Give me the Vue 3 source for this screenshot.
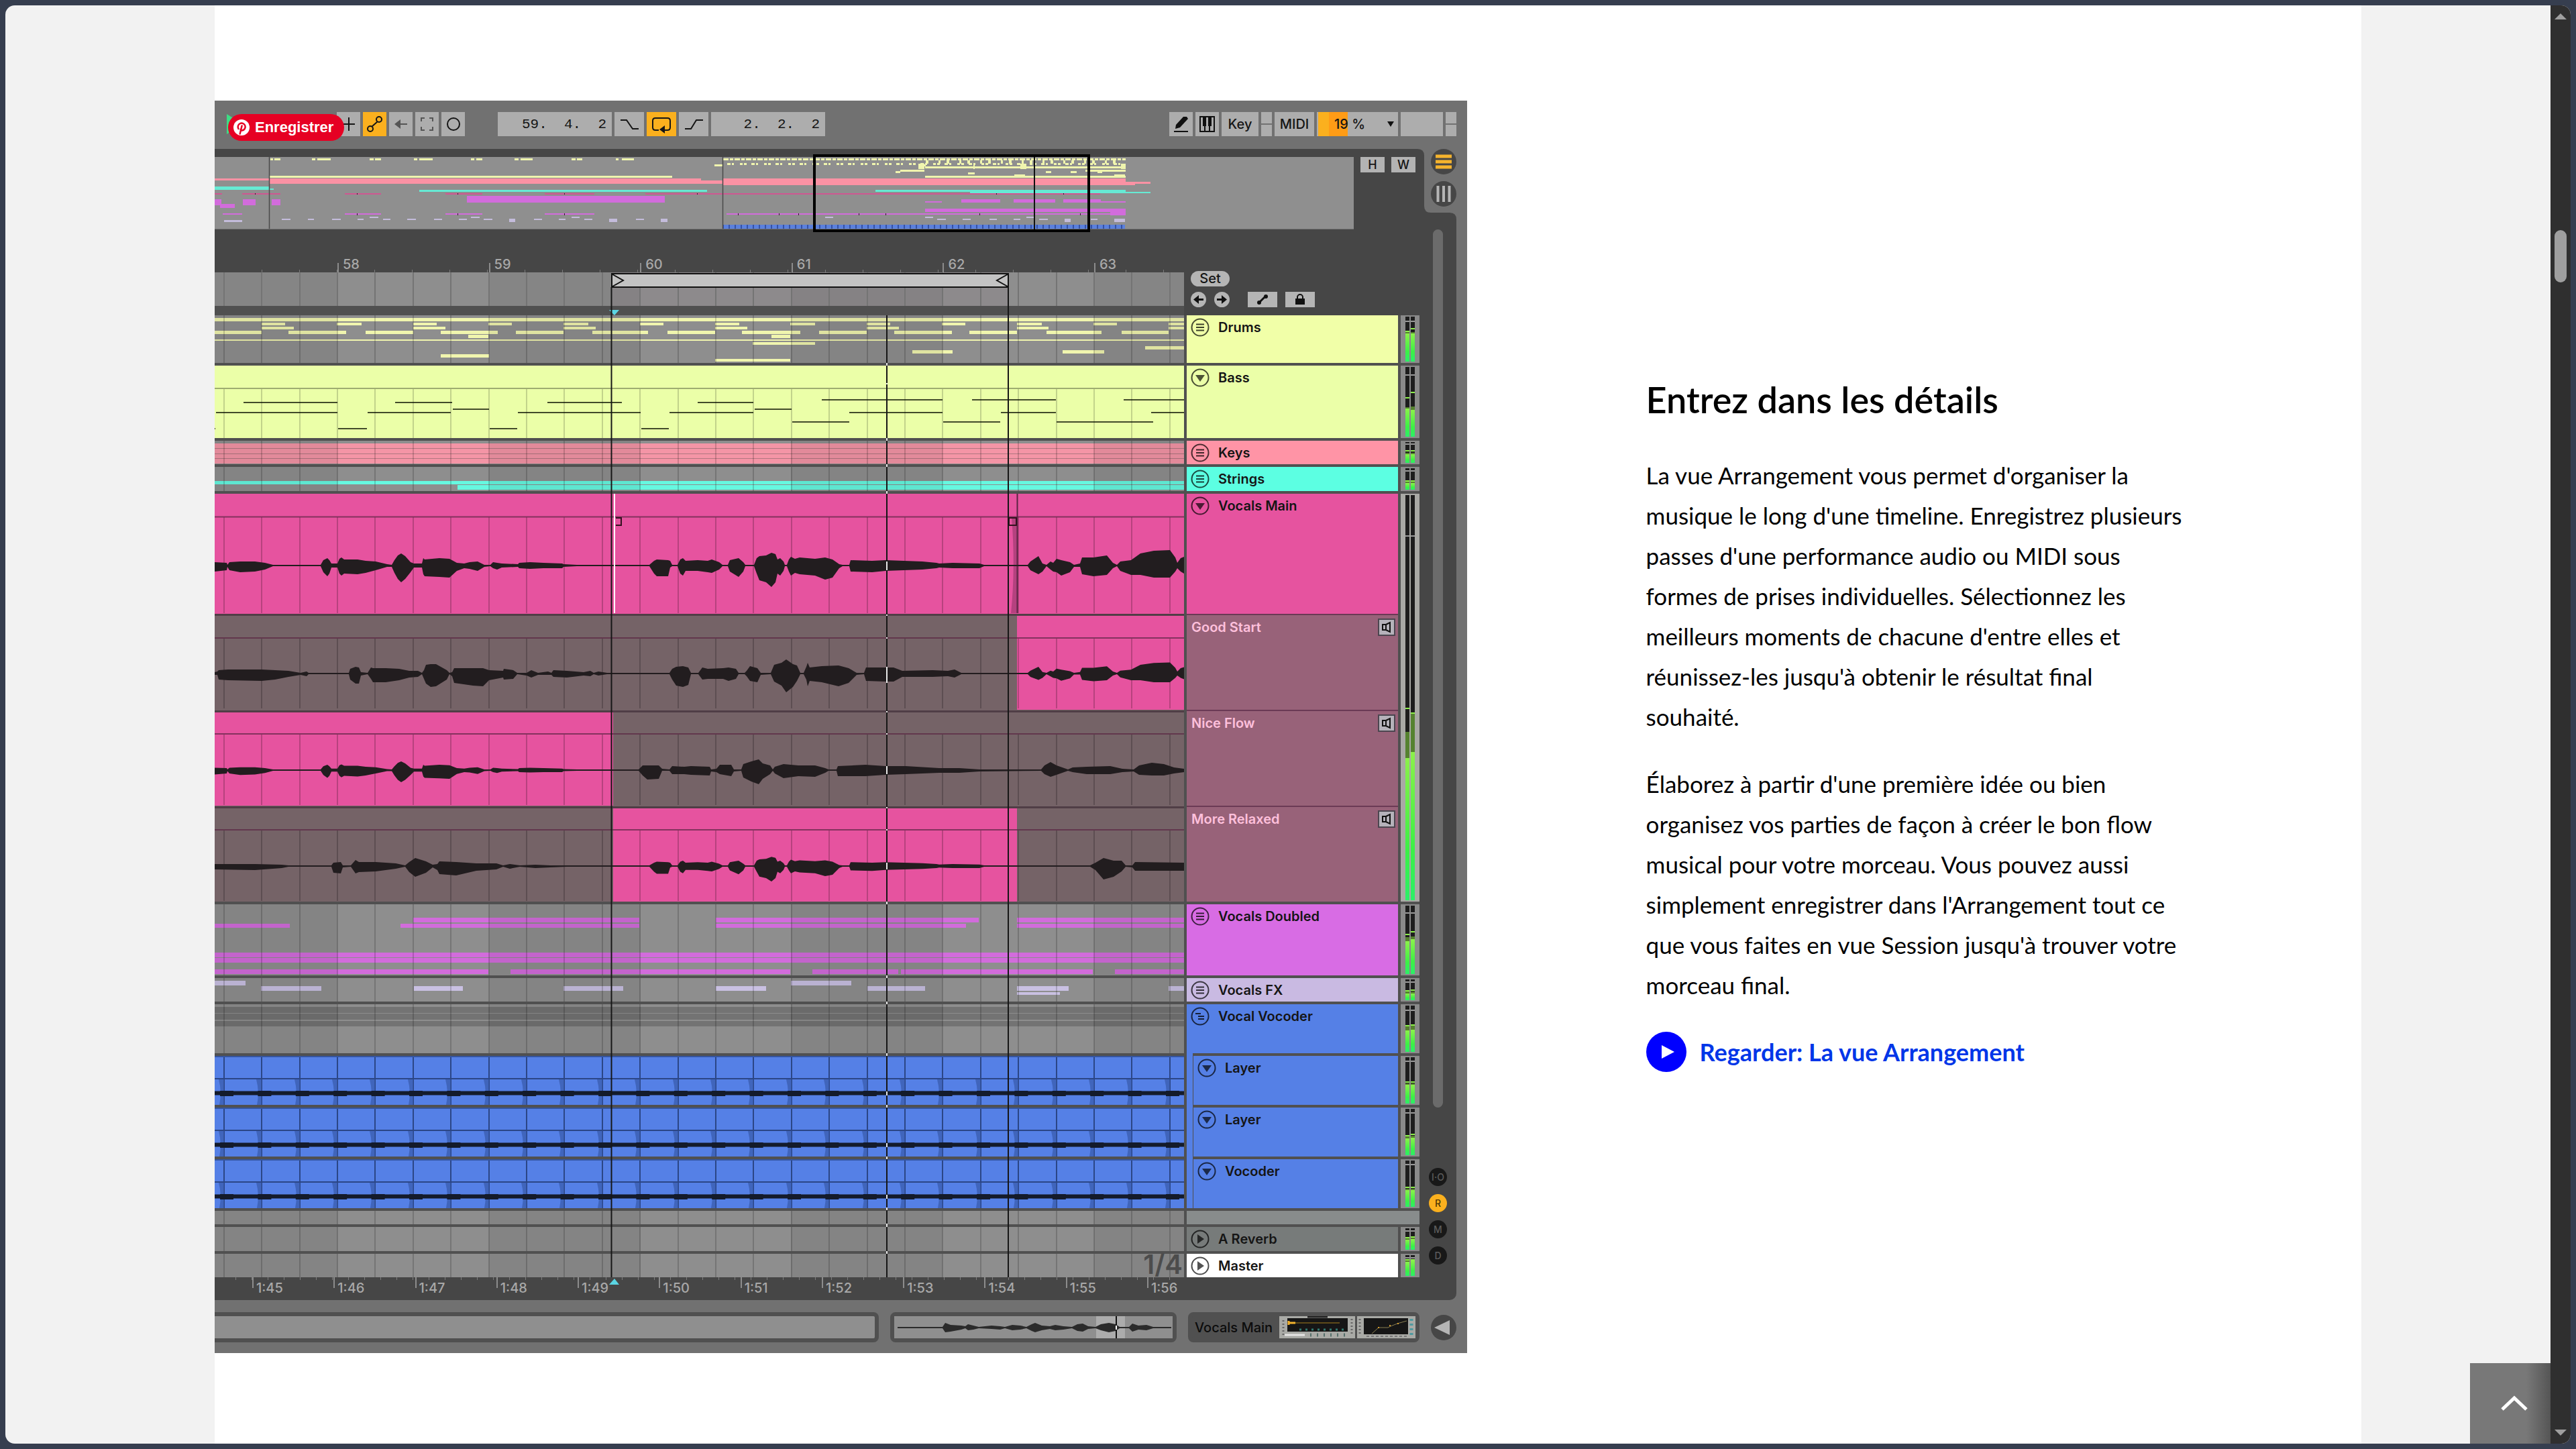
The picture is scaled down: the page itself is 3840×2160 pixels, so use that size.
<template>
   <div class="frame">
      <main class="page">
         <section class="feature">
            <div class="live">
               <button class="pin" type="button">
                  <svg width="24" height="24" viewBox="0 0 24 24">
                     <circle cx="12" cy="12" r="12" fill="#fff" />
                     <path
                        d="M7.500 14A5.500 5.500 0 1 1 13 16.500Q11.300 16.500 10.600 15M12.600 9.500 9.700 21.500"
                        fill="none"
                        stroke="#e60023"
                        stroke-width="2.500"
                        stroke-linecap="round"
                     />
                  </svg>
                  Enregistrer
               </button>

               <div class="toolbar">
                  <svg class="play-mark" width="24" height="36" viewBox="0 0 24 36">
                     <path d="M0 3 24 18 0 33Z" fill="#3ddc84" />
                  </svg>
                  <div class="tool-group">
                     <button
                        v-for="tool in tools"
                        :key="tool.name"
                        class="tool"
                        :class="{ active: tool.active }"
                        type="button"
                        :aria-label="tool.name"
                     >
                        <svg width="35" height="36" viewBox="0 0 35 36">
                           <path :d="tool.d" fill="none" :stroke="tool.stroke" stroke-width="2" />
                           <path v-if="tool.fill" :d="tool.fill" :fill="tool.stroke" />
                        </svg>
                     </button>
                  </div>
                  <div class="tool-group transport">
                     <span class="position">59.&nbsp;&nbsp;4.&nbsp;&nbsp;2</span>
                     <button
                        v-for="tool in loopTools"
                        :key="tool.name"
                        class="tool wide"
                        :class="{ active: tool.active }"
                        type="button"
                        :aria-label="tool.name"
                     >
                        <svg width="44" height="36" viewBox="0 0 44 36">
                           <path :d="tool.d" fill="none" stroke="#151515" stroke-width="2" />
                           <path v-if="tool.fill" :d="tool.fill" fill="#151515" />
                        </svg>
                     </button>
                     <span class="position">2.&nbsp;&nbsp;2.&nbsp;&nbsp;2</span>
                  </div>
                  <div class="tool-group right">
                     <button class="tool" type="button" aria-label="Draw">
                        <svg width="35" height="36" viewBox="0 0 35 36">
                           <path d="M10 19 21 7h5l2 3L16 23l-7 2Z" fill="#111" />
                           <path d="M7 29H28" stroke="#111" stroke-width="2" />
                        </svg>
                     </button>
                     <button class="tool" type="button" aria-label="Keyboard">
                        <svg width="35" height="36" viewBox="0 0 35 36">
                           <path d="M7 7H28V29H7ZM14 20V29M21 20V29" fill="none" stroke="#111" stroke-width="2" />
                           <path d="M11 7h5v14h-5ZM19 7h5v14h-5Z" fill="#111" />
                        </svg>
                     </button>
                     <button class="tool key" type="button">Key</button>
                     <span class="leds"><i></i><i></i></span>
                     <button class="tool midi" type="button">MIDI</button>
                     <button class="tool cpu" type="button">
                        <span>19 %</span>
                        <svg width="10" height="8" viewBox="0 0 10 8"><path d="M0 0H10L5 8Z" fill="#111" /></svg>
                     </button>
                     <span class="disk"></span>
                     <span class="leds"><i></i><i></i></span>
                  </div>
               </div>

               <div class="arranger">
                  <div class="top">
                     <svg class="overview" viewBox="0 0 1698 108" preserveAspectRatio="none">
                        <rect width="1698" height="108" fill="#8f8f8f" />
                        <g v-for="layer in overview" :key="layer.fill" :fill="layer.fill">
                           <rect
                              v-for="(r, i) in layer.list"
                              :key="i"
                              :x="r[0]"
                              :y="r[2]"
                              :width="r[1] - r[0]"
                              :height="r[3]"
                           />
                        </g>
                        <path d="M758 3.500H1358" stroke="#f0f5ae" stroke-width="3" stroke-dasharray="8 2 5 2" />
                        <path d="M764 10.500H1358" stroke="#f0f5ae" stroke-width="3" stroke-dasharray="5 2 3 9 4 2 4 7" />
                        <path d="M1060 7.500H1358" stroke="#f0f5ae" stroke-width="5" stroke-dasharray="4 15 3 9" />
                        <path d="M757 104.500H1357" stroke="#3552a5" stroke-width="7" stroke-dasharray="2 7" />
                        <path d="M81.500 0V108M757.500 0V108" stroke="#4a4a4a" stroke-width="1.500" />
                        <path d="M0 107.500H1698" stroke="#707070" />
                        <path d="M1222 0V108" stroke="#111" stroke-width="2" />
                        <rect x="894" y="-2" width="409" height="112" fill="none" stroke="#000" stroke-width="4" />
                     </svg>
                     <button class="chip" type="button">H</button>
                     <button class="chip" type="button">W</button>
                     <div class="notch">
                        <svg class="notch-shape" width="58" height="105" viewBox="0 0 58 105">
                           <path d="M0 0H58V105Q58 95 48 95H20Q10 95 10 85V10Q10 0 0 0Z" fill="#717171" />
                        </svg>
                        <button class="round" type="button" aria-label="Arrangement">
                           <svg width="38" height="38" viewBox="0 0 38 38">
                              <path d="M7 11H31M7 19H31M7 27H31" stroke="#f5b32d" stroke-width="5" />
                           </svg>
                        </button>
                        <button class="round" type="button" aria-label="Session">
                           <svg width="38" height="38" viewBox="0 0 38 38">
                              <path d="M10.500 7V31M19 7V31M27.500 7V31" stroke="#b5b5b5" stroke-width="4" />
                           </svg>
                        </button>
                     </div>
                  </div>

                  <div class="body">
                     <div class="main">
                        <div class="heading">
                           <div class="rulers">
                              <div class="bars">
                                 <span></span>
                                 <span v-for="bar in bars" :key="bar" class="bar">{{ bar }}</span>
                              </div>
                              <svg class="scrub" viewBox="0 0 1445 50" preserveAspectRatio="none">
                                 <rect width="1445" height="50" fill="#8e8e8e" />
                                 <rect
                                    v-for="b in darkBars"
                                    :key="b[0]"
                                    :x="b[0]"
                                    :width="b[1] - b[0]"
                                    height="50"
                                    fill="#000"
                                    opacity=".06"
                                 />
                                 <rect x="591" width="592" height="50" fill="#8a6a80" opacity=".1" />
                                 <path :d="gridPath(0, 50)" stroke="#747474" stroke-width="2" />
                                 <rect x="592" y="2" width="591" height="20" fill="#c3c3c3" stroke="#111" stroke-width="2" />
                                 <path d="M593 3 609 12 593 21M1182 3 1166 12 1182 21" fill="none" stroke="#111" stroke-width="2" />
                              </svg>
                              <svg class="strip" viewBox="0 0 1445 14" preserveAspectRatio="none">
                                 <path d="M588 6H603L596 14Z" fill="#5bd5e3" />
                              </svg>
                           </div>
                           <div class="locators">
                              <button class="set" type="button">Set</button>
                              <div class="locator-row">
                                 <button class="dot" type="button" aria-label="Previous locator">
                                    <svg width="23" height="23" viewBox="0 0 23 23">
                                       <path d="M19 11.500H8" stroke="#111" stroke-width="3" />
                                       <path d="M4 11.500 12 5V18Z" fill="#111" />
                                    </svg>
                                 </button>
                                 <button class="dot" type="button" aria-label="Next locator">
                                    <svg width="23" height="23" viewBox="0 0 23 23">
                                       <path d="M4 11.500H15" stroke="#111" stroke-width="3" />
                                       <path d="M19 11.500 11 5V18Z" fill="#111" />
                                    </svg>
                                 </button>
                                 <button class="flat" type="button" aria-label="Automation">
                                    <svg width="44" height="23" viewBox="0 0 44 23">
                                       <path d="M18 15 26 7" stroke="#111" stroke-width="3" />
                                       <circle cx="17" cy="16" r="3" fill="#111" />
                                       <circle cx="27" cy="7" r="3" fill="#111" />
                                    </svg>
                                 </button>
                                 <button class="flat" type="button" aria-label="Lock">
                                    <svg width="44" height="23" viewBox="0 0 44 23">
                                       <path d="M15 10H29V19H15Z" fill="#111" />
                                       <path d="M18 11V8a4 4 0 0 1 8 0V11" fill="none" stroke="#111" stroke-width="2" />
                                    </svg>
                                 </button>
                              </div>
                           </div>
                        </div>

                        <div
                           v-for="track in tracks"
                           :key="track.id"
                           class="track"
                           :class="{ nested: track.nested }"
                           :style="{ height: track.h + 'px' }"
                        >
                           <svg class="lane" :viewBox="`0 0 1445 ${track.h}`" preserveAspectRatio="none">
                              <rect width="1445" :height="track.h" :fill="track.lane || '#8e8e8e'" />
                              <g v-for="(layer, n) in track.notes" :key="n" :fill="layer.fill">
                                 <rect
                                    v-for="(r, i) in layer.list"
                                    :key="i"
                                    :x="r[0]"
                                    :y="r[2]"
                                    :width="r[1] - r[0]"
                                    :height="r[3]"
                                 />
                              </g>
                              <template v-if="!track.lane">
                                 <rect
                                    v-for="b in darkBars"
                                    :key="b[0]"
                                    :x="b[0]"
                                    :width="b[1] - b[0]"
                                    :height="track.h"
                                    fill="#000"
                                    opacity=".07"
                                 />
                              </template>
                              <path
                                 v-if="track.id !== 'vocals'"
                                 :d="gridPath(track.gridTop || 0, track.h)"
                                 :stroke="track.grid || '#000'"
                                 :opacity="track.grid ? 1 : 0.17"
                                 stroke-width="2"
                              />

                              <!-- комп-дорожка: верхний клип и три дубля -->
                              <g v-if="track.id === 'vocals'">
                                 <rect y="182" width="1445" height="426" fill="#756367" />
                                 <path d="M1196 182H1445V322H1196ZM0 326H594V465H0ZM594 469H1196V608H594Z" fill="#e6539f" />
                                 <path
                                    :d="gridPath(35, 178) + gridPath(216, 320) + gridPath(359, 464) + gridPath(502, 607)"
                                    stroke="#000"
                                    opacity=".2"
                                    stroke-width="2"
                                 />
                                 <path d="M0 34.500H1445M0 215H1445M0 358H1445M0 501H1445" stroke="#5b2543" opacity=".7" stroke-width="2" />
                                 <path d="M0 180.500H1445M0 324.500H1445M0 467.500H1445" stroke="#503e46" stroke-width="3" />
                                 <path d="M1196 35V178H1187Q1194 110 1188 35Z" fill="#a03a72" opacity=".7" />
                                 <path d="M1196.500 0V178" stroke="#5b2543" stroke-width="2" />
                                 <path v-for="(w, i) in waves" :key="i" :d="w" fill="#221d1f" />
                                 <path d="M596 0V178" stroke="#fff" stroke-width="2" />
                                 <path d="M598 36H606V47H598M1184 36H1195V47H1184Z" fill="none" stroke="#33111f" stroke-width="2" />
                              </g>

                              <g v-if="track.nested">
                                 <path v-for="x in gridXs" :key="x" :d="`M${x} 35V73H${x - 7}Q${x - 3} 54 ${x - 8} 35Z`" fill="#3a5cae" opacity=".75" />
                                 <path d="M0 34H1445" stroke="#2b4686" stroke-width="2" />
                                 <path d="M0 55.500H1445" stroke="#141b2b" stroke-width="6" />
                                 <path d="M8 56H1445" stroke="#141b2b" stroke-width="8" stroke-dasharray="20 36.400" />
                                 <path d="M0 1H1445" stroke="#35559f" stroke-width="2" />
                              </g>
                           </svg>

                           <div v-if="track.name" class="head" :style="{ backgroundColor: track.color }">
                              <div class="name">
                                 <svg width="28" height="28" viewBox="0 0 28 28">
                                    <circle cx="14" cy="14" r="12.500" fill="none" stroke="#000" stroke-opacity=".7" stroke-width="2" />
                                    <path
                                       v-if="icons[track.icon].stroke"
                                       :d="icons[track.icon].stroke"
                                       stroke="#000"
                                       stroke-opacity=".75"
                                       stroke-width="2"
                                    />
                                    <path v-else :d="icons[track.icon].fill" fill="#000" fill-opacity=".68" />
                                 </svg>
                                 <span>{{ track.name }}</span>
                              </div>
                              <div v-for="take in track.takes" :key="take" class="take">
                                 <span>{{ take }}</span>
                                 <button class="speaker" type="button" :aria-label="'Audition ' + take">
                                    <svg width="22" height="22" viewBox="0 0 22 22">
                                       <path d="M5 7H10V15H5ZM10 7 16 4V18L10 15" fill="none" stroke="#111" stroke-width="2" />
                                    </svg>
                                 </button>
                              </div>
                           </div>
                           <div v-else class="head empty"></div>

                           <svg
                              v-if="track.meter"
                              class="meter"
                              :class="{ bright: track.id === 'vocals' }"
                              width="28"
                              :height="track.h"
                              :viewBox="`0 0 28 ${track.h}`"
                           >
                              <defs>
                                 <linearGradient :id="'level-' + track.id" x1="0" y1="1" x2="0" y2="0">
                                    <stop offset="0" stop-color="#2bef68" />
                                    <stop offset=".35" stop-color="#3cf046" />
                                    <stop offset="1" stop-color="#8cf04b" />
                                 </linearGradient>
                              </defs>
                              <g v-for="(m, i) in track.meter.ch" :key="i">
                                 <rect :x="7 + i * 8" y="2" width="6" :height="track.h - 4" fill="#1d1d1d" />
                                 <rect :x="7 + i * 8" :y="track.meter.sep" width="6" height="2" fill="#9a9a9a" />
                                 <rect :x="7 + i * 8" :y="m[1]" width="6" :height="m[2] - m[1]" fill="#55822f" />
                                 <rect :x="7 + i * 8" :y="m[0]" width="6" height="2" fill="#8cf04b" />
                                 <rect
                                    :x="7 + i * 8"
                                    :y="m[2]"
                                    width="6"
                                    :height="track.h - 2 - m[2]"
                                    :fill="`url(#level-${track.id})`"
                                 />
                              </g>
                           </svg>
                           <span v-if="track.id === 'master'" class="zoom-level">1/4</span>
                        </div>

                        <div class="times">
                           <span></span>
                           <span v-for="time in times" :key="time" class="time">{{ time }}</span>
                        </div>

                        <svg class="cursors" viewBox="0 0 1445 1490" preserveAspectRatio="none">
                           <path d="M591.500 0V1476M1183 0V1476" stroke="#161616" stroke-width="2" />
                           <path d="M1002 42V1476" stroke="#161616" stroke-width="2" />
                           <path :d="playheadMarks" stroke="#e8e8e8" stroke-width="2" />
                           <path d="M588 1487H603L596 1478Z" fill="#5bd5e3" />
                        </svg>
                     </div>

                     <div class="rail">
                        <div class="rail-bar"></div>
                        <div class="toggles">
                           <button
                              v-for="t in ['I·O', 'R', 'M', 'D']"
                              :key="t"
                              class="toggle"
                              :class="{ on: t === 'R' }"
                              type="button"
                           >
                              {{ t }}
                           </button>
                        </div>
                     </div>
                  </div>
               </div>

               <div class="status">
                  <div class="box info"></div>
                  <div class="box clip">
                     <svg viewBox="0 0 415 33" preserveAspectRatio="none">
                        <rect width="415" height="33" fill="#8f8f8f" />
                        <rect x="301" width="43" height="33" fill="#acacac" />
                        <path :d="miniWave" fill="#2b2b2b" />
                        <path d="M331 0V33" stroke="#111" stroke-width="2" />
                        <path d="M331 14V20" stroke="#fff" stroke-width="2" />
                     </svg>
                  </div>
                  <div class="box device">
                     <span>Vocals Main</span>
                     <svg width="113" height="33" viewBox="0 0 113 33">
                        <rect width="113" height="33" fill="#a9aaa6" />
                        <path d="M12 3H102V23H12Z" fill="#161616" />
                        <path d="M42 1H72" stroke="#222" stroke-width="3" />
                        <path d="M14 10H90" stroke="#a7801f" stroke-width="1" />
                        <path d="M14 7V13M15 10H24" stroke="#f5b32d" stroke-width="3" />
                        <path d="M30 20H100" stroke="#2f7a70" stroke-width="3" stroke-dasharray="3 6" />
                        <path d="M46 28H104" stroke="#55706c" stroke-width="5" stroke-dasharray="2 8" />
                        <path d="M6 6V28M108 4V28" stroke="#666" stroke-width="3" stroke-dasharray="2 3" />
                        <path d="M8 28H38" stroke="#e4e4e4" stroke-width="3" />
                     </svg>
                     <svg width="87" height="33" viewBox="0 0 87 33">
                        <rect width="87" height="33" fill="#a9aaa6" />
                        <path d="M10 3H76V27H10Z" fill="#161616" />
                        <path d="M22 26 32 17H46L50 15 60 11 74 7" fill="none" stroke="#8a7f52" stroke-width="1" />
                        <path d="M31 17h2M48 14h2M60 11h2" stroke="#d69d2b" stroke-width="2" />
                        <path d="M4 4V28" stroke="#666" stroke-width="3" stroke-dasharray="2 3" />
                        <path d="M81 4V28" stroke="#4f9aa0" stroke-width="5" stroke-dasharray="3 4" />
                        <path d="M14 30H74" stroke="#777" stroke-width="2" stroke-dasharray="4 3" />
                     </svg>
                  </div>
                  <button class="round" type="button" aria-label="Hide detail view">
                     <svg width="38" height="38" viewBox="0 0 38 38"><path d="M28 8V30L5 19Z" fill="#b5b5b5" /></svg>
                  </button>
               </div>
            </div>

            <div class="copy">
               <h2>Entrez dans les détails</h2>
               <p>
                  La vue Arrangement vous permet d'organiser la<br />
                  musique le long d'une timeline. Enregistrez plusieurs<br />
                  passes d'une performance audio ou MIDI sous<br />
                  formes de prises individuelles. Sélectionnez les<br />
                  meilleurs moments de chacune d'entre elles et<br />
                  réunissez-les jusqu'à obtenir le résultat final<br />
                  souhaité.
               </p>
               <p>
                  Élaborez à partir d'une première idée ou bien<br />
                  organisez vos parties de façon à créer le bon flow<br />
                  musical pour votre morceau. Vous pouvez aussi<br />
                  simplement enregistrer dans l'Arrangement tout ce<br />
                  que vous faites en vue Session jusqu'à trouver votre<br />
                  morceau final.
               </p>
               <a class="watch" href="#">
                  <svg width="60" height="60" viewBox="0 0 60 60">
                     <circle cx="30" cy="30" r="30" fill="#0000ff" />
                     <path d="M23 20 42 30 23 40Z" fill="#fff" />
                  </svg>
                  Regarder: La vue Arrangement
               </a>
            </div>
         </section>
      </main>

      <button class="to-top" type="button" aria-label="Haut de page">
         <svg width="40" height="24" viewBox="0 0 40 24">
            <path d="M2 21 20 4 38 21" fill="none" stroke="#fff" stroke-width="5" />
         </svg>
      </button>
      <div class="scrollbar">
         <svg width="18" height="9" viewBox="0 0 18 9"><path d="M0 9 9 0 18 9Z" fill="#9f9f9f" /></svg>
         <div class="thumb"></div>
         <svg width="18" height="9" viewBox="0 0 18 9"><path d="M0 0H18L9 9Z" fill="#9f9f9f" /></svg>
      </div>
   </div>
</template>

<script setup>
const bars = [58, 59, 60, 61, 62, 63];
const times = ["1:45", "1:46", "1:47", "1:48", "1:49", "1:50", "1:51", "1:52", "1:53", "1:54", "1:55", "1:56"];

const tools = [
   { name: "Overdub", stroke: "#151515", d: "M9 18H27M18 8V28" },
   {
      name: "Automation arm",
      active: true,
      stroke: "#151515",
      d: "M13 22 22 14M7 25a4 4 0 1 0 8 0a4 4 0 1 0-8 0M20 11a4 4 0 1 0 8 0a4 4 0 1 0-8 0",
   },
   { name: "Re-enable automation", stroke: "#555", d: "M12 18H27", fill: "M8 18 17 11V25Z" },
   { name: "Capture", stroke: "#555", d: "M9 14V9H14M21 9H26V14M26 22V27H21M14 27H9V22" },
   { name: "Session record", stroke: "#151515", d: "M9 18a9 9 0 1 0 18 0a9 9 0 1 0-18 0" },
];

const loopTools = [
   { name: "Punch in", d: "M9 12H18L27 25H36" },
   {
      name: "Loop",
      active: true,
      d: "M18 27H13Q9 27 9 23V13Q9 9 13 9H31Q35 9 35 13V23Q35 27 31 27H26",
      fill: "M19 26 27 20V32Z",
   },
   { name: "Punch out", d: "M9 25H18L26 12H36" },
];

const icons = {
   list: { stroke: "M8 9.500H20M8 14H20M8 18.500H20" },
   fold: { fill: "M7 10H21L14 20Z" },
   unfold: { fill: "M10 7V21L20 14Z" },
   group: { stroke: "M7 10H15M11 14H20M11 18H20" },
};

// Чётные такты темнее нечётных
const darkBars = [
   [0, 183],
   [409, 635],
   [859, 1085],
   [1311, 1445],
];

const gridXs = [];
for (let k = -3; k < 23; k++) {
   gridXs.push(Math.round(183 + k * 56.4));
}

const gridPath = (from, to) => gridXs.map((x) => `M${x} ${from}V${to}`).join("");

const row = (y, h, spans) => spans.map(([a, b]) => [a, b, y, h]);

// Точки волны: [x, вверх, вниз]
const mainWave = [
   [0, 5, 9], [18, 4, 7], [19, 1, 2], [22, 5, 7], [38, 6, 10], [60, 6, 9], [75, 4, 6], [87, 1, 1], [158, 1, 1],
   [162, 8, 10], [168, 11, 16], [171, 8, 12], [174, 3, 3], [183, 3, 3], [186, 10, 12], [189, 12, 15], [193, 9, 12],
   [213, 9, 13], [225, 7, 11], [240, 6, 7], [257, 2, 2], [264, 1, 2], [268, 8, 11], [273, 15, 20], [278, 18, 25],
   [284, 14, 20], [292, 5, 10], [297, 3, 3], [309, 3, 3], [311, 11, 13], [313, 9, 16], [335, 11, 17], [350, 10, 18],
   [361, 4, 8], [372, 3, 4], [380, 5, 5], [392, 6, 8], [402, 1, 2], [411, 1, 1], [415, 5, 4], [421, 4, 6],
   [428, 3, 3], [452, 2, 2], [454, 4, 4], [470, 5, 5], [490, 4, 4], [518, 3, 4], [520, 2, 2], [540, 1, 1],
   [648, 1, 1], [655, 7, 12], [659, 9, 16], [676, 8, 16], [679, 7, 3], [682, 1, 1], [690, 1, 1], [694, 9, 12],
   [698, 11, 15], [702, 7, 8], [720, 8, 8], [735, 7, 10], [741, 9, 11], [752, 5, 6], [757, 1, 1], [765, 1, 1],
   [768, 8, 9], [781, 11, 17], [788, 5, 9], [791, 1, 1], [804, 1, 1], [808, 11, 12], [812, 14, 22], [822, 15, 25],
   [830, 19, 32], [836, 17, 25], [839, 9, 12], [843, 11, 15], [848, 6, 8], [850, 1, 1], [853, 1, 1], [856, 9, 9],
   [859, 13, 15], [865, 10, 11], [872, 12, 13], [895, 10, 15], [910, 12, 21], [921, 9, 18], [931, 2, 4],
   [936, 1, 1], [946, 1, 1], [948, 8, 9], [980, 7, 10], [1000, 8, 8], [1055, 6, 6], [1076, 4, 4], [1080, 3, 3],
   [1100, 4, 4], [1140, 3, 4], [1147, 1, 1], [1212, 1, 1], [1216, 6, 7], [1228, 14, 13], [1234, 3, 9], [1240, 1, 1],
   [1246, 6, 6], [1250, 4, 9], [1255, 10, 10], [1262, 8, 15], [1275, 5, 10], [1281, 1, 2], [1290, 3, 2],
   [1293, 12, 13], [1310, 12, 16], [1330, 15, 14], [1339, 4, 4], [1345, 1, 1], [1350, 6, 8], [1366, 8, 14],
   [1380, 18, 14], [1400, 22, 18], [1424, 23, 18], [1432, 12, 9], [1435, 4, 4], [1440, 11, 9], [1445, 13, 12],
];

const goodStart = [
   [0, 2, 2], [4, 3, 2], [6, 5, 9], [20, 6, 10], [70, 6, 11], [90, 5, 9], [110, 4, 5], [128, 1, 2], [137, 3, 4],
   [140, 1, 1], [200, 1, 1], [202, 7, 9], [210, 10, 15], [215, 9, 15], [218, 2, 3], [228, 1, 1], [233, 9, 8],
   [236, 8, 13], [255, 8, 13], [275, 7, 10], [290, 4, 6], [303, 4, 5], [309, 1, 1], [312, 5, 8], [315, 13, 15],
   [322, 14, 20], [330, 14, 19], [346, 5, 9], [350, 1, 1], [354, 2, 4], [357, 8, 14], [385, 8, 18], [400, 8, 19],
   [409, 5, 10], [430, 4, 6], [431, 7, 9], [445, 5, 8], [451, 1, 1], [465, 1, 3], [472, 5, 6], [482, 1, 2],
   [497, 3, 2], [502, 1, 2], [505, 5, 5], [525, 4, 6], [550, 2, 3], [560, 4, 4], [565, 1, 1], [572, 3, 3],
   [585, 1, 1], [678, 1, 1], [682, 7, 9], [688, 10, 18], [698, 11, 20], [706, 9, 17], [710, 1, 1], [721, 1, 1],
   [727, 9, 9], [735, 7, 8], [758, 8, 8], [766, 9, 11], [777, 7, 8], [781, 1, 1], [790, 1, 1], [793, 4, 4],
   [798, 11, 11], [809, 8, 13], [814, 1, 2], [829, 1, 1], [834, 13, 12], [845, 16, 18], [852, 21, 28],
   [862, 14, 20], [868, 12, 11], [873, 1, 1], [878, 1, 1], [882, 10, 9], [884, 16, 19], [887, 9, 11],
   [905, 11, 13], [930, 12, 19], [945, 8, 14], [957, 1, 2], [968, 1, 1], [971, 9, 11], [1000, 9, 12],
   [1012, 9, 12], [1025, 4, 5], [1070, 5, 5], [1093, 4, 4], [1103, 6, 6], [1113, 1, 1], [1212, 1, 1],
];

const niceFlow = [
   [594, 1, 1], [632, 1, 1], [638, 7, 8], [645, 7, 14], [662, 7, 13], [667, 2, 1], [678, 1, 1], [682, 6, 6],
   [700, 5, 6], [710, 6, 7], [738, 5, 8], [740, 1, 2], [748, 2, 3], [753, 8, 6], [770, 8, 9], [774, 1, 2],
   [785, 1, 1], [788, 9, 11], [800, 13, 17], [811, 16, 21], [817, 10, 13], [828, 7, 6], [832, 1, 1], [835, 5, 5],
   [848, 9, 12], [870, 7, 9], [895, 7, 10], [910, 3, 4], [915, 1, 1], [927, 1, 1], [929, 6, 9], [970, 8, 9],
   [1000, 6, 7], [1030, 6, 6], [1080, 3, 4], [1110, 3, 4], [1140, 1, 2], [1232, 1, 1], [1237, 7, 6],
   [1246, 12, 10], [1255, 7, 7], [1272, 1, 1], [1279, 4, 3], [1300, 5, 6], [1335, 6, 6], [1353, 2, 3],
   [1370, 1, 2], [1378, 7, 7], [1397, 11, 8], [1415, 9, 8], [1430, 4, 5], [1445, 2, 3],
];

const relaxedStart = [
   [0, 3, 5], [60, 3, 6], [100, 2, 3], [110, 1, 1], [174, 1, 1], [177, 5, 10], [188, 6, 11], [191, 1, 2],
   [203, 1, 1], [210, 9, 11], [215, 6, 9], [240, 6, 8], [270, 4, 4], [284, 1, 1], [290, 6, 9], [299, 12, 16],
   [315, 7, 10], [325, 2, 2], [332, 3, 6], [335, 7, 12], [360, 6, 14], [390, 4, 7], [420, 4, 5], [430, 1, 1],
   [440, 3, 4], [455, 1, 1], [478, 2, 3], [500, 1, 2], [525, 1, 1], [640, 1, 1],
];

const relaxedEnd = [
   [1195, 1, 1], [1305, 1, 1], [1313, 5, 6], [1325, 12, 20], [1340, 8, 16], [1352, 8, 8], [1358, 1, 1],
   [1368, 1, 2], [1372, 6, 7], [1445, 5, 7],
];

const part = (points, from, to) =>
   points
      .filter(([x]) => x >= from && x <= to)
      .map(([x, up, down]) => [x, Math.max(1, up * 0.72), Math.max(1, down * 0.72)]);

const wave = (points, y) => {
   const top = points.map(([x, up]) => `${x} ${(y - up).toFixed(1)}`);
   const bottom = points.map(([x, , down]) => `${x} ${(y + down).toFixed(1)}`).reverse();
   return `M${top.join("L")}L${bottom.join("L")}Z`;
};

const waves = [
   wave(mainWave, 107),
   wave([...goodStart, ...part(mainWave, 1216, 1445)], 268),
   wave([...part(mainWave, 0, 590), ...niceFlow], 412),
   wave([...relaxedStart, ...part(mainWave, 648, 1147), ...relaxedEnd], 555),
];

const miniWave = wave(
   [
      [5, 1, 1], [72, 1, 1], [76, 7, 7], [84, 4, 6], [100, 3, 3], [106, 2, 1], [110, 5, 4], [118, 3, 3], [126, 1, 1],
      [145, 3, 2], [158, 2, 3], [165, 1, 1], [176, 4, 4], [188, 3, 3], [197, 1, 1], [205, 5, 5], [210, 7, 7],
      [220, 3, 4], [232, 2, 2], [240, 4, 4], [252, 2, 3], [265, 1, 1], [273, 5, 5], [281, 6, 6], [289, 2, 2],
      [300, 1, 1], [308, 5, 4], [320, 7, 7], [330, 5, 5], [336, 1, 1], [350, 1, 1], [355, 6, 6], [364, 3, 3],
      [376, 4, 4], [386, 1, 1], [413, 1, 1],
   ],
   17
);

// Светлые точки плейхеда на стыках дорожек
const playheadMarks = [
   [113, 117], [143, 145], [225, 229], [264, 268], [304, 308], [409, 422], [488, 490], [522, 524], [566, 590],
   [632, 634], [665, 667], [714, 726], [775, 777], [808, 810], [858, 868], [916, 920], [1026, 1030], [1065, 1069],
   [1142, 1146], [1199, 1205], [1219, 1223], [1276, 1282], [1296, 1300], [1353, 1359], [1372, 1376], [1396, 1401],
   [1437, 1441],
]
   .map(([a, b]) => `M1002 ${a}V${b}`)
   .join("");

const full = [[0, 1445]];
const blue = "#5580e6";

const tracks = [
   {
      id: "drums",
      name: "Drums",
      icon: "list",
      color: "#f1ffa8",
      h: 71,
      meter: { sep: 8, ch: [[23, 25, 27], [19, 25, 27]] },
      notes: [
         {
            fill: "#f0f5ae",
            list: [
               ...row(4, 5, full),
               ...row(11, 4, [[70, 105], [182, 219], [296, 331], [408, 443], [520, 557], [634, 669], [746, 782], [858, 895], [972, 1007], [1084, 1119], [1196, 1233], [1310, 1345], [1422, 1445]]),
               ...row(17, 4, [[70, 118], [296, 344], [520, 568], [746, 794], [972, 1020], [1196, 1243], [1422, 1445]]),
               ...row(23, 5, [[0, 70], [110, 196], [225, 296], [337, 422], [449, 520], [563, 646], [675, 746], [786, 873], [901, 972], [1013, 1099], [1125, 1196], [1240, 1322], [1352, 1422]]),
               ...row(29, 5, [[378, 408], [830, 858]]),
               ...row(36, 2, full),
               ...row(40, 4, [[802, 895]]),
               ...row(46, 5, [[1387, 1445]]),
               ...row(52, 5, [[1040, 1100], [1264, 1326]]),
               ...row(58, 5, [[337, 409]]),
               ...row(65, 4, [[746, 858]]),
            ],
         },
      ],
   },
   {
      id: "bass",
      name: "Bass",
      icon: "fold",
      color: "#ebffa8",
      lane: "#ebffa8",
      gridTop: 35,
      h: 108,
      meter: { sep: 13, ch: [[47, 62, 64], [39, 61, 66]] },
      notes: [
         { fill: "#9eac70", list: row(33, 2, full) },
         {
            fill: "#434b2b",
            list: [
               ...row(50, 2, [[905, 1085], [1129, 1254], [1355, 1445]]),
               ...row(54, 2, [[43, 183], [269, 354], [496, 607], [720, 803]]),
               ...row(64, 2, [[355, 409], [805, 860]]),
               ...row(69, 2, [[2, 183], [228, 352], [452, 635], [678, 803], [946, 1085], [1172, 1254], [1396, 1445]]),
               ...row(83, 2, [[861, 946], [1086, 1171], [1255, 1399]]),
               ...row(93, 2, [[0, 1], [184, 227], [410, 451], [636, 677]]),
            ],
         },
      ],
   },
   {
      id: "keys",
      name: "Keys",
      icon: "list",
      color: "#ff94a6",
      h: 35,
      meter: { sep: 4, ch: [[14, 18, 20], [14, 18, 20]] },
      notes: [
         { fill: "#f495a6", list: row(4, 30, full) },
         { fill: "#b07780", list: [...row(11, 1, full), ...row(19, 1, full), ...row(26, 1, full)] },
      ],
   },
   {
      id: "strings",
      name: "Strings",
      icon: "list",
      color: "#5cffe2",
      h: 36,
      meter: { sep: 5, ch: [[20, 22, 24], [20, 22, 24]] },
      notes: [{ fill: "#66f8e0", list: [...row(21, 5, full), ...row(27, 7, [[362, 1445]])] }],
   },
   {
      id: "vocals",
      name: "Vocals Main",
      icon: "fold",
      color: "#e6539f",
      lane: "#e6539f",
      h: 608,
      takes: ["Good Start", "Nice Flow", "More Relaxed"],
      meter: { sep: 62, ch: [[319, 355, 394], [326, 328, 385]] },
   },
   {
      id: "doubled",
      name: "Vocals Doubled",
      icon: "list",
      color: "#d86ce4",
      h: 106,
      meter: { sep: 12, ch: [[44, 49, 55], [40, 48, 52]] },
      notes: [
         {
            fill: "#d26cdc",
            list: [
               ...row(20, 7, [[296, 633], [747, 1139], [1196, 1445]]),
               ...row(29, 6, [[0, 112], [277, 633], [747, 1120], [1196, 1445]]),
               ...row(72, 7, full),
               ...row(80, 7, full),
               ...row(97, 7, [[0, 408], [441, 858], [891, 1019], [1023, 1309], [1342, 1445]]),
            ],
         },
      ],
   },
   {
      id: "fx",
      name: "Vocals FX",
      icon: "list",
      color: "#c9bae2",
      h: 35,
      meter: { sep: 5, ch: [[18, 20, 23], [17, 20, 23]] },
      notes: [
         {
            fill: "#c9c0e2",
            list: [
               ...row(4, 7, [[0, 46], [859, 949]]),
               ...row(12, 7, [[69, 159], [297, 370], [520, 609], [747, 822], [973, 1059], [1196, 1273], [1422, 1445]]),
               ...row(21, 4, [[1196, 1260]]),
            ],
         },
      ],
   },
   {
      id: "vocoder-group",
      name: "Vocal Vocoder",
      icon: "group",
      color: blue,
      h: 73,
      meter: { sep: 8, ch: [[31, 33, 39], [30, 32, 38]] },
      notes: [{ fill: "#737373", list: [...row(4, 9, full), ...row(14, 9, full), ...row(25, 8, full)] }],
   },
   {
      id: "layer-1",
      name: "Layer",
      icon: "fold",
      color: blue,
      lane: blue,
      grid: "#2b4686",
      nested: true,
      h: 73,
      meter: { sep: 7, ch: [[38, 41, 43], [38, 41, 43]] },
   },
   {
      id: "layer-2",
      name: "Layer",
      icon: "fold",
      color: blue,
      lane: blue,
      grid: "#2b4686",
      nested: true,
      h: 73,
      meter: { sep: 7, ch: [[41, 43, 46], [39, 42, 45]] },
   },
   {
      id: "vocoder",
      name: "Vocoder",
      icon: "fold",
      color: blue,
      lane: blue,
      grid: "#2b4686",
      nested: true,
      h: 73,
      meter: { sep: 7, ch: [[41, 44, 46], [41, 44, 46]] },
   },
   { id: "drop", h: 20 },
   {
      id: "reverb",
      name: "A Reverb",
      icon: "unfold",
      color: "#777b7a",
      h: 36,
      meter: { sep: 5, ch: [[15, 17, 19], [14, 16, 18]] },
   },
   {
      id: "master",
      name: "Master",
      icon: "unfold",
      color: "#ffffff",
      h: 35,
      meter: { sep: 5, ch: [[8, 8, 12], [8, 8, 10]] },
   },
];

const overview = [
   {
      fill: "#f0f5ae",
      list: [
         ...row(2, 3, [[83, 87], [89, 98], [145, 150], [153, 173], [231, 237], [239, 248], [297, 302], [305, 325], [382, 387], [390, 399], [447, 453], [456, 474], [532, 538], [540, 548], [598, 602], [607, 625]]),
         ...row(11, 3, [[745, 757], [1050, 1060]]),
         ...row(28, 3, [[82, 682], [1059, 1358]]),
         ...row(14, 3, [[1059, 1358]]),
         ...row(19, 3, [[1022, 1058], [1298, 1358]]),
         ...row(21, 3, [[1015, 1022], [1239, 1247], [1276, 1285], [1316, 1323]]),
         ...row(23, 3, [[1123, 1133]]),
         ...row(26, 3, [[1192, 1208], [1341, 1357]]),
         ...row(10, 8, [[1049, 1058], [1131, 1133], [1201, 1210], [1351, 1358]]),
      ],
   },
   {
      fill: "#fb92a4",
      list: [
         [0, 81, 32, 3], [81, 725, 32, 8], [725, 757, 35, 5], [757, 1358, 32, 10], [1358, 1395, 37, 3],
         [1358, 1372, 37, 5],
      ],
   },
   {
      fill: "#66ead4",
      list: [
         [0, 81, 44, 5], [81, 88, 47, 2], [305, 734, 49, 3], [985, 1358, 49, 3], [1126, 1395, 52, 2],
         [1126, 1358, 49, 5],
      ],
   },
   {
      fill: "#cf5791",
      list: row(54, 2, [[0, 11], [41, 98], [194, 248], [344, 399], [492, 566], [642, 1320]]),
   },
   {
      fill: "#d26cdc",
      list: [
         ...row(58, 10, [[376, 671]]),
         ...row(63, 9, [[42, 61], [85, 98], [0, 10]]),
         ...row(70, 6, [[8, 30]]),
         ...row(63, 5, [[1113, 1171], [1191, 1253], [1265, 1321]]),
         ...row(66, 2, [[1059, 1084], [1321, 1358]]),
         ...row(77, 5, [[1059, 1358]]),
         ...row(80, 7, [[1335, 1358]]),
         ...row(84, 2, [[12, 41], [194, 248], [344, 399], [492, 566], [763, 1357]]),
      ],
   },
   {
      fill: "#c4bcdc",
      list: [
         ...row(92, 2, [[100, 113], [139, 148], [175, 188], [213, 222], [251, 262], [287, 300], [327, 339], [364, 376], [401, 414], [476, 488], [513, 523], [551, 563], [628, 640], [1077, 1090], [1115, 1127], [1155, 1166], [1191, 1201], [1229, 1242], [1306, 1316]]),
         ...row(92, 5, [[439, 448], [588, 600], [665, 675], [1267, 1276], [1341, 1357]]),
         ...row(89, 2, [[231, 244], [382, 395], [532, 544], [910, 922], [1059, 1071], [1210, 1221]]),
         ...row(94, 3, [[14, 41]]),
      ],
   },
   {
      fill: "#2f1a2c",
      list: [
         ...row(54, 2, [[60, 61], [212, 213], [362, 363], [521, 522], [719, 720], [1165, 1166], [1265, 1266]]),
         ...row(84, 3, [[212, 213], [362, 363], [521, 522], [780, 781], [841, 842], [870, 871], [960, 961], [1000, 1001], [1140, 1141], [1290, 1291]]),
      ],
   },
   { fill: "#5b80dc", list: row(101, 7, [[757, 1357]]) },
];
</script>

<style>
html,
body {
   margin: 0;
   background: #363e4f;
}
</style>

<style scoped>
.frame {
   position: relative;
   box-sizing: border-box;
   min-height: 100vh;
   padding: 8px;
   background: #363e4f;
}

.page {
   min-height: calc(100vh - 16px);
   background: #f2f2f2;
   border-radius: 14px;
   overflow: hidden;
   display: flex;
   justify-content: center;
}

.feature {
   box-sizing: border-box;
   width: 100%;
   max-width: 3200px;
   padding: 142px 0 135px;
   background: #fff;
   display: grid;
   grid-template-columns: 7fr 1fr 3fr 1fr;
   align-items: center;
}

button {
   margin: 0;
   padding: 0;
   border: 0;
   font: inherit;
   color: inherit;
   background: none;
   cursor: pointer;
}

svg {
   display: block;
   flex: none;
}

/* Окно Live */
.live {
   position: relative;
   background: #717171;
   font-family: Inter, "Liberation Sans", sans-serif;
   font-size: 20px;
   font-weight: 500;
   color: #151515;
}

.pin {
   position: absolute;
   left: 20px;
   top: 20px;
   height: 40px;
   padding: 0 16px 0 8px;
   display: flex;
   align-items: center;
   gap: 8px;
   border-radius: 20px;
   background: #e60023;
   color: #fff;
   font-family: "Liberation Sans", sans-serif;
   font-size: 22px;
   font-weight: 700;
}

.toolbar {
   height: 36px;
   padding: 17px 16px 19px 18px;
   display: flex;
}

.tool-group {
   display: flex;
   gap: 4px;
}

.play-mark {
   margin-right: 140px;
}

.transport {
   margin-left: 49px;
}

.right {
   margin-left: auto;
}

.tool,
.position,
.disk {
   height: 36px;
   min-width: 35px;
   background: #adadad;
   display: flex;
   align-items: center;
   justify-content: center;
}

.tool.active {
   background: #fbb01e;
}

.tool.wide {
   min-width: 44px;
}

.position {
   box-sizing: border-box;
   width: 170px;
   padding-right: 8px;
   justify-content: flex-end;
   font-family: "Liberation Mono", monospace;
   font-size: 21px;
   white-space: nowrap;
}

.key {
   width: 55px;
}

.midi {
   width: 59px;
}

.cpu {
   box-sizing: border-box;
   width: 121px;
   padding: 0 6px 0 26px;
   justify-content: space-between;
   background: linear-gradient(90deg, #adadad 2px, #fbb01e 2px 18px, #ff9c16 18px 46px, #adadad 46px);
}

.disk {
   width: 63px;
}

.leds {
   width: 16px;
   display: flex;
   flex-direction: column;
   gap: 2px;
}

.leds i {
   flex: 1;
   background: #adadad;
}

.arranger {
   margin-right: 16px;
   background: #464646;
   border-radius: 0 0 10px 0;
}

.top {
   height: 120px;
   display: flex;
   align-items: flex-start;
   gap: 10px;
}

.overview {
   flex: 1 1 0;
   min-width: 0;
   height: 108px;
   margin-top: 12px;
   overflow: visible;
}

.chip {
   width: 36px;
   height: 23px;
   margin-top: 12px;
   background: #b3b3b3;
   font-size: 18px;
   line-height: 23px;
}

.notch {
   position: relative;
   width: 51px;
   display: flex;
   flex-direction: column;
   align-items: flex-end;
   gap: 10px;
}

.notch-shape {
   position: absolute;
   top: 0;
   right: 0;
}

.round {
   position: relative;
   width: 38px;
   height: 38px;
   border-radius: 50%;
   background: #464646;
}

.body {
   display: flex;
}

.main {
   position: relative;
   flex: 1;
   min-width: 0;
}

.heading {
   display: flex;
   gap: 4px;
   height: 128px;
}

.rulers {
   flex: 1;
   min-width: 0;
}

.bars {
   height: 64px;
   display: grid;
   grid-template-columns: 183px repeat(5, 1fr) 134px;
   align-items: end;
   color: #a8a8a8;
   background: repeating-linear-gradient(90deg, transparent 0 55px, #7c7c7c 55px 56px) 15px bottom / 100% 4px no-repeat;
}

.bar {
   height: 14px;
   padding-left: 6px;
   border-left: 2px solid #8c8c8c;
   line-height: 4px;
}

.scrub {
   width: 100%;
   height: 50px;
}

.strip {
   width: 100%;
   height: 14px;
   background: #505050;
}

.locators {
   width: 341px;
   padding: 62px 0 0 6px;
   display: flex;
   flex-direction: column;
   align-items: flex-start;
   gap: 8px;
}

.set {
   width: 58px;
   height: 23px;
   border-radius: 12px;
   background: #b5b5b5;
   line-height: 23px;
}

.locator-row {
   display: flex;
   gap: 12px;
}

.dot {
   width: 23px;
   height: 23px;
   border-radius: 50%;
   background: #b5b5b5;
}

.flat {
   width: 44px;
   height: 23px;
   background: #b5b5b5;
}

.dot + .flat {
   margin-left: 15px;
}

.track {
   position: relative;
   display: flex;
   gap: 4px;
   padding-bottom: 4px;
   background: #505050;
}

.track:nth-last-child(3) {
   padding-bottom: 0;
}

.lane {
   flex: 1 1 0;
   min-width: 0;
   height: 100%;
}

.head {
   width: 315px;
   flex: none;
}

.head.empty {
   width: 347px;
   background: #888c8c;
}

.nested .head {
   position: relative;
   width: 305px;
   margin-left: 10px;
}

.nested .head::before {
   content: "";
   position: absolute;
   left: -10px;
   top: -4px;
   bottom: 0;
   width: 9px;
   background: #5580e6;
}

.name {
   display: flex;
   align-items: center;
   gap: 13px;
   padding: 4px 0 0 6px;
   font-weight: 600;
   line-height: 28px;
}

.head:has(.take) .name {
   height: 175px;
   align-items: flex-start;
}

.take {
   box-sizing: border-box;
   height: 143px;
   padding: 5px 4px 0 7px;
   display: flex;
   align-items: flex-start;
   justify-content: space-between;
   border-top: 2px solid #6b3a55;
   background: #986279;
   color: #ffc0dc;
   font-weight: 600;
   line-height: 26px;
}

.speaker {
   border: 2px solid #4c4650;
   background: #b5b2ba;
}

.meter {
   background: #8a8a8a;
}

.meter.bright {
   background: #a9a9a5;
}

.zoom-level {
   position: absolute;
   right: 353px;
   top: 0;
   font-size: 40px;
   font-weight: 600;
   line-height: 32px;
   color: #4c4c4c;
}

.times {
   height: 34px;
   margin-right: 351px;
   display: grid;
   grid-template-columns: 56px repeat(11, 1fr) 55px;
   color: #a8a8a8;
   background: repeating-linear-gradient(90deg, transparent 0 23px, #7c7c7c 23px 24px) 8px top / 100% 4px no-repeat;
}

.time {
   height: 16px;
   padding-left: 4px;
   border-left: 2px solid #8c8c8c;
   line-height: 33px;
}

.cursors {
   position: absolute;
   left: 0;
   top: 86px;
   width: calc(100% - 351px);
   height: 1490px;
   pointer-events: none;
}

.rail {
   width: 55px;
   display: flex;
   flex-direction: column;
}

.rail-bar {
   width: 15px;
   height: 1309px;
   margin-left: 20px;
   border-radius: 8px;
   background: #6b6b6b;
}

.toggles {
   margin: 90px 0 0 14px;
   display: flex;
   flex-direction: column;
   gap: 12px;
}

.toggle {
   width: 27px;
   height: 27px;
   border-radius: 50%;
   background: #181818;
   color: #5c5c5c;
   font-size: 14px;
   line-height: 27px;
}

.toggle.on {
   background: #fbb01e;
   color: #4a3405;
}

.status {
   height: 45px;
   padding: 18px 16px 16px 0;
   display: flex;
   align-items: center;
   gap: 17px;
}

.box {
   box-sizing: border-box;
   height: 45px;
   border: 6px solid #505050;
   border-radius: 8px;
   background: #8f8f8f;
}

.info {
   flex: 1;
   border-left: 0;
   border-radius: 0 8px 8px 0;
}

.clip {
   width: 427px;
}

.clip svg {
   width: 100%;
   height: 33px;
}

.device {
   width: 345px;
   padding-left: 4px;
   display: flex;
   align-items: center;
   justify-content: space-between;
   background: #505050;
   color: #0c0c0c;
   white-space: nowrap;
}

.device span {
   flex: 1;
}

.device svg + svg {
   margin-left: 3px;
}

/* Текст справа */
.copy {
   grid-column: 3;
   font-family: Lato, "Open Sans", sans-serif;
   font-size: 35px;
   line-height: 60px;
   color: #000;
   white-space: nowrap;
}

.copy h2 {
   margin: 0 0 56px;
   font-size: 54px;
   line-height: 52px;
   font-weight: 600;
}

.copy p {
   margin: 0 0 40px;
}

.watch {
   display: flex;
   align-items: center;
   gap: 20px;
   color: #0036e8;
   font-size: 36px;
   font-weight: 700;
   text-decoration: none;
}

.to-top {
   position: absolute;
   right: 38px;
   bottom: 8px;
   width: 120px;
   height: 120px;
   display: flex;
   align-items: center;
   justify-content: center;
   padding-left: 12px;
   background: linear-gradient(90deg, #787878 70%, #555 100%);
}

.scrollbar {
   position: absolute;
   right: 8px;
   top: 8px;
   bottom: 8px;
   width: 30px;
   box-sizing: border-box;
   padding: 12px 0;
   display: flex;
   flex-direction: column;
   align-items: center;
   background: #2f2f2f;
   border-radius: 0 14px 14px 0;
}

.thumb {
   width: 18px;
   height: 78px;
   margin: 314px 0 auto;
   border-radius: 9px;
   background: #9f9f9f;
}
</style>
